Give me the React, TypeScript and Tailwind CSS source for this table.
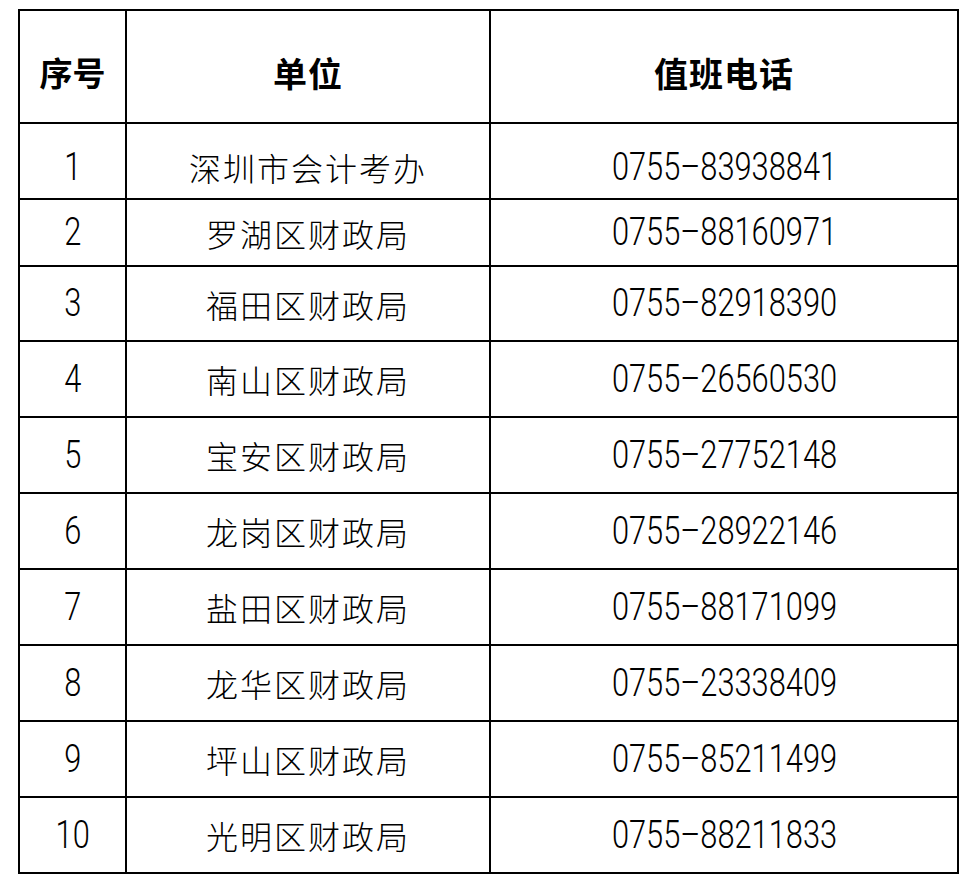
const rows = [
  { no: '1', unit: '深圳市会计考办', tel: '0755–83938841' },
  { no: '2', unit: '罗湖区财政局', tel: '0755–88160971' },
  { no: '3', unit: '福田区财政局', tel: '0755–82918390' },
  { no: '4', unit: '南山区财政局', tel: '0755–26560530' },
  { no: '5', unit: '宝安区财政局', tel: '0755–27752148' },
  { no: '6', unit: '龙岗区财政局', tel: '0755–28922146' },
  { no: '7', unit: '盐田区财政局', tel: '0755–88171099' },
  { no: '8', unit: '龙华区财政局', tel: '0755–23338409' },
  { no: '9', unit: '坪山区财政局', tel: '0755–85211499' },
  { no: '10', unit: '光明区财政局', tel: '0755–88211833' },
];

const cjk = "font-['Noto_Sans_CJK_SC',sans-serif]";

// digits in the source are a condensed face; squeeze Roboto Light to match
function Num({ children }: { children: string }) {
  return (
    <span className="inline-block scale-x-[0.79] origin-center text-[39px] font-light leading-none font-['Roboto','Liberation_Sans',sans-serif]">
      {children}
    </span>
  );
}

export default function App() {
  return (
    <div className="w-[980px] h-[882px] bg-white pt-[9px] pl-[18px] text-black">
      <div className="grid w-fit grid-cols-[105px_362px_466px] grid-rows-[111px_74px_65px_73px_repeat(7,74px)] gap-[2px] p-[2px] bg-black">
        {/* Header */}
        <div className={`bg-white flex items-center justify-center pt-[12px] text-[33px] font-bold leading-none ${cjk}`}>
          序号
        </div>
        <div className={`bg-white flex items-center justify-center pt-[12px] text-[34px] font-bold leading-none tracking-[1px] ${cjk}`}>
          单位
        </div>
        <div className={`bg-white flex items-center justify-center pt-[12px] text-[34px] font-bold leading-none tracking-[1px] ${cjk}`}>
          值班电话
        </div>

        {rows.map((r, i) => {
          const pad = i === 0 ? 'pt-[12px]' : '';
          return (
            <div key={r.no} className="contents">
              <div className={`bg-white flex items-center justify-center ${pad}`}>
                <Num>{r.no}</Num>
              </div>
              <div className={`bg-white flex items-center justify-center ${pad} text-[32px] font-light leading-none tracking-[2px] ${cjk}`}>
                {r.unit}
              </div>
              <div className={`bg-white flex items-center justify-center ${pad}`}>
                <Num>{r.tel}</Num>
              </div>
            </div>
          );
        })}
      </div>
    </div>
  );
}
